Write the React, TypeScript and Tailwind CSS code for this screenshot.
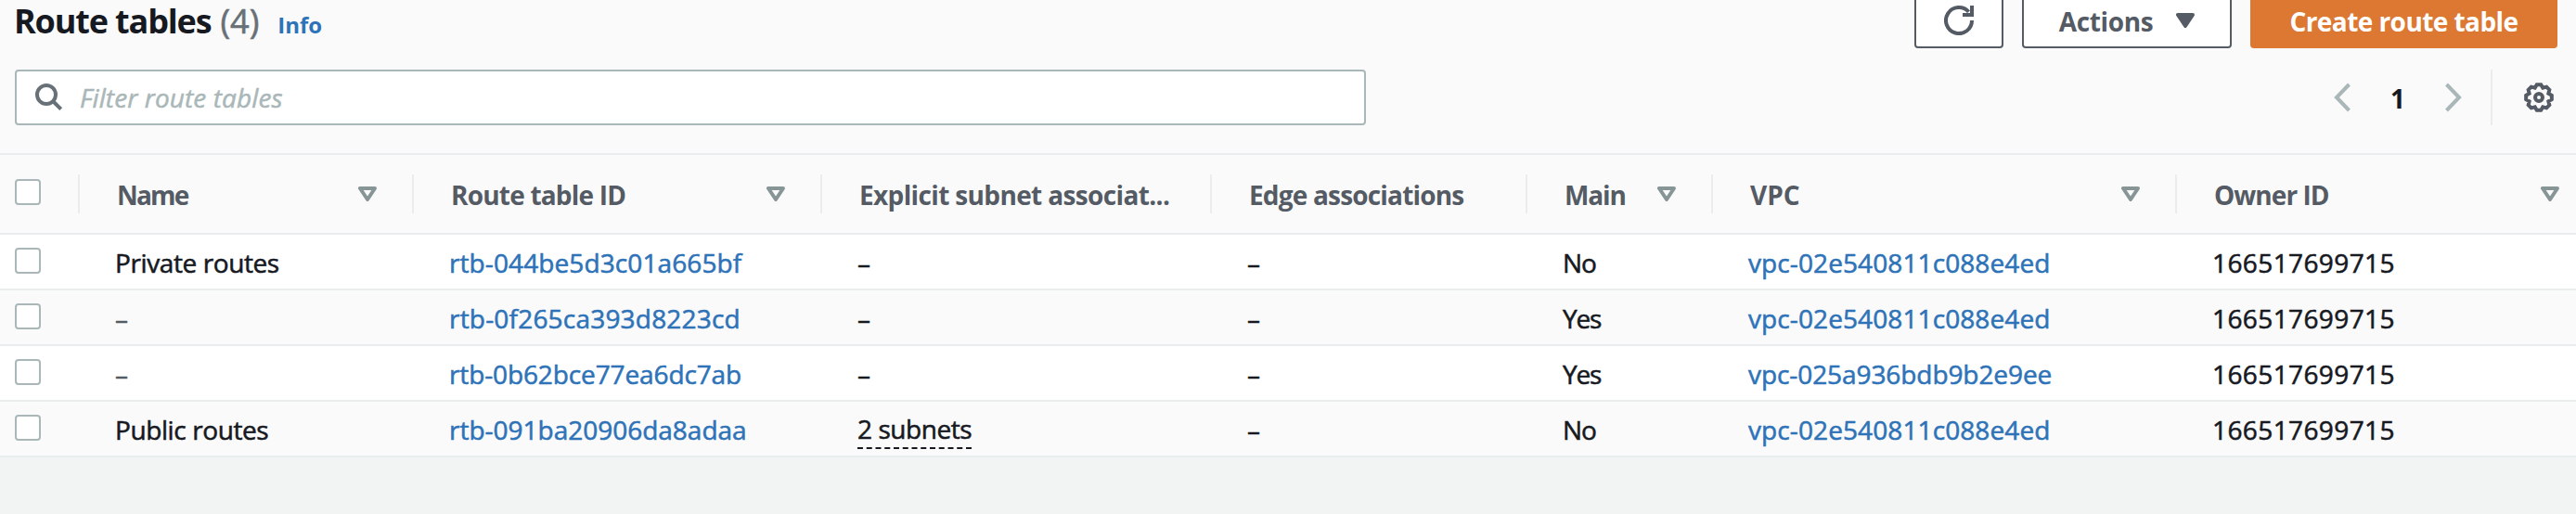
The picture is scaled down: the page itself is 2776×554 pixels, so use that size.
import type { ReactNode } from "react";

type Column = { label: string; sortable: boolean; tracking: string };
type Cell = { text: string; tracking: string; kind?: "link" | "muted" | "popover" };

const columns: Column[] = [
  { label: "Name", sortable: true, tracking: "tracking-[-1.8px]" },
  { label: "Route table ID", sortable: true, tracking: "tracking-[-0.8px]" },
  { label: "Explicit subnet associat...", sortable: false, tracking: "tracking-[-0.64px]" },
  { label: "Edge associations", sortable: false, tracking: "tracking-[-0.82px]" },
  { label: "Main", sortable: true, tracking: "tracking-[-1.1px]" },
  { label: "VPC", sortable: true, tracking: "" },
  { label: "Owner ID", sortable: true, tracking: "tracking-[-0.95px]" },
];

const name = (text: string): Cell => ({ text, tracking: "tracking-[-0.4px]" });
const link = (text: string, tracking: string): Cell => ({ text, tracking, kind: "link" });
const dash: Cell = { text: "–", tracking: "" };
const mutedDash: Cell = { text: "–", tracking: "", kind: "muted" };
const no: Cell = { text: "No", tracking: "tracking-[-1px]" };
const yes: Cell = { text: "Yes", tracking: "tracking-[-1.2px]" };
const owner: Cell = { text: "166517699715", tracking: "tracking-[0.4px]" };
const mainVpc = link("vpc-02e540811c088e4ed", "tracking-[0.1px]");

const rows: Cell[][] = [
  [name("Private routes"), link("rtb-044be5d3c01a665bf", "tracking-[0.1px]"), dash, dash, no, mainVpc, owner],
  [mutedDash, link("rtb-0f265ca393d8223cd", "tracking-[0.2px]"), dash, dash, yes, mainVpc, owner],
  [mutedDash, link("rtb-0b62bce77ea6dc7ab", "tracking-[-0.12px]"), dash, dash, yes, link("vpc-025a936bdb9b2e9ee", "tracking-[-0.08px]"), owner],
  [
    name("Public routes"),
    link("rtb-091ba20906da8adaa", "tracking-[-0.01px]"),
    { text: "2 subnets", tracking: "tracking-[-0.45px]", kind: "popover" },
    dash,
    no,
    mainVpc,
    owner,
  ],
];

const grid = "grid grid-cols-[86px_360px_440px_420px_340px_200px_500px_430px]";

const gearPath =
  Array.from({ length: 8 }, (_, k) => {
    const point = (deg: number, r: number) => {
      const a = ((k * 45 + deg - 90) * Math.PI) / 180;
      return `${(16 + r * Math.cos(a)).toFixed(2)} ${(16 + r * Math.sin(a)).toFixed(2)}`;
    };
    return `${k === 0 ? "M" : "L"}${point(-9, 14)}L${point(9, 14)}L${point(22.5, 11.2)}`;
  }).join("") + "Z";

function Triangle({ filled = false }: { filled?: boolean }) {
  return (
    <svg width="20" height="16" viewBox="0 0 20 16" className={filled ? "text-[#545b64]" : "text-[#879596]"}>
      <path d="M2 2H18L10 14Z" fill={filled ? "currentColor" : "none"} stroke="currentColor" strokeWidth="4" strokeLinejoin="round" />
    </svg>
  );
}

function Chevron({ flip = false }: { flip?: boolean }) {
  return (
    <svg width="18" height="32" viewBox="0 0 18 32" className={flip ? "-scale-x-100" : ""}>
      <path d="M16.5 2L3 16L16.5 30" fill="none" stroke="#aab7b8" strokeWidth="4" />
    </svg>
  );
}

function Checkbox() {
  return <span className="ml-4 block size-7 rounded-[4px] border-2 border-[#aab7b8] bg-white" />;
}

function Button({ className, children }: { className: string; children: ReactNode }) {
  return (
    <button className={`flex h-[60px] items-center justify-center rounded-[4px] text-[28px] font-bold ${className}`}>
      {children}
    </button>
  );
}

function CellText({ cell }: { cell: Cell }) {
  if (cell.kind === "link") return <a className={`text-[#2e73b8] ${cell.tracking}`}>{cell.text}</a>;
  if (cell.kind === "popover")
    return <span className={`mt-px h-[42px] border-b-2 border-dashed border-[#16191f] leading-[40px] ${cell.tracking}`}>{cell.text}</span>;
  return <span className={`${cell.kind === "muted" ? "text-[#545b64]" : ""} ${cell.tracking}`}>{cell.text}</span>;
}

export default function App() {
  return (
    <div className="h-[554px] w-[2776px] overflow-hidden bg-[#f2f3f3] font-['Open_Sans',sans-serif] text-[28px] whitespace-nowrap text-[#16191f]">
      <header className="bg-[#fafafa]">
        <div className="flex h-[52px] items-start justify-between pr-5 pl-[15px]">
          <div className="flex h-11 items-baseline pt-px leading-[44px]">
            <h1 className="text-[36px] font-bold tracking-[-1.15px]">Route tables</h1>
            <span className="ml-[10px] text-[36px] text-[#687078] [-webkit-text-stroke:0.6px]">(4)</span>
            <a className="ml-[20px] text-[24px] font-bold text-[#2e73b8]">Info</a>
          </div>
          <div className="-mt-2 flex gap-5">
            <Button className="w-24 border-2 border-[#545b64] bg-white">
              <svg width="32" height="32" viewBox="0 0 32 32" fill="none" stroke="#545b64" strokeWidth="4">
                <path d="M30 16A14 14 0 1 1 26.5 6.8" />
                <path d="M30 0V10H20" />
              </svg>
            </Button>
            <Button className="w-[226px] gap-[25px] border-2 border-[#545b64] bg-white text-[#545b64]">
              <span className="pt-0.5 tracking-[-0.35px]">Actions</span>
              <Triangle filled />
            </Button>
            <Button className="w-[331px] bg-[#dd7832] pt-px tracking-[-0.56px] text-white">Create route table</Button>
          </div>
        </div>
        <div className="flex items-center justify-between pt-[23px] pr-6 pb-[30px] pl-4">
          <div className="flex h-[60px] w-[1456px] items-center gap-[18px] rounded-[4px] border-2 border-[#aab7b8] bg-white pl-5">
            <svg width="30" height="30" viewBox="0 0 30 30" fill="none" stroke="#687078" strokeWidth="4">
              <circle cx="12" cy="12" r="10" />
              <path d="M19 19L27.7 27.7" />
            </svg>
            <span className="tracking-[0.1px] text-[#aab7b8] italic [-webkit-text-stroke:0.5px]">Filter route tables</span>
          </div>
          <div className="flex h-[60px] items-center">
            <Chevron />
            <span className="w-[102px] pt-px text-center font-bold">1</span>
            <Chevron flip />
            <span className="ml-[31px] h-full w-0.5 bg-[#eaeded]" />
            <svg width="32" height="32" viewBox="0 0 32 32" fill="none" stroke="#545b64" strokeWidth="4" className="ml-[34px]">
              <path d={gearPath} />
              <circle cx="16" cy="16" r="4" />
            </svg>
          </div>
        </div>
      </header>

      <div className={`${grid} h-[88px] items-center border-y-2 border-[#eaeded] bg-[#fafafa]`}>
        <div className="flex h-[42px] items-center border-r-2 border-[#eaeded]">
          <div className="-mt-1">
            <Checkbox />
          </div>
        </div>
        {columns.map((column, i) => (
          <div
            key={column.label}
            className={`flex h-[42px] items-center justify-between pl-[40px] ${i < columns.length - 1 ? "border-r-2 border-[#eaeded] pr-[38px]" : "pr-[18px]"}`}
          >
            <span className={`pt-0.5 font-bold text-[#545b64] ${column.tracking}`}>{column.label}</span>
            {column.sortable && <Triangle />}
          </div>
        ))}
      </div>

      {rows.map((cells, r) => (
        <div
          key={r}
          className={`${grid} h-[60px] border-b-2 border-[#eaeded] [-webkit-text-stroke:0.55px] ${r % 2 ? "bg-[#fafafa]" : "bg-white"}`}
        >
          <div className="pt-3.5">
            <Checkbox />
          </div>
          {cells.map((cell, i) => (
            <div key={i} className={`flex items-center pl-[38px] ${cell.kind === "popover" ? "" : "pt-[2px]"}`}>
              <CellText cell={cell} />
            </div>
          ))}
        </div>
      ))}
    </div>
  );
}
